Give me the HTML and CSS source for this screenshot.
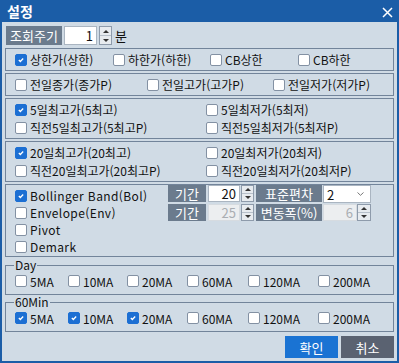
FILE: index.html
```html
<!DOCTYPE html>
<html lang="ko">
<head>
    <meta charset="UTF-8">
    <meta name="viewport" content="width=device-width, initial-scale=1.0">
    <title>설정</title>
    <link rel="stylesheet" href="styles.css">
</head>
<body>
    <div class="window">
        <div class="titlebar">
            <span class="title">설정</span>
            <svg class="close" width="11" height="11" viewBox="0 0 11 11"><path d="M1 1L10 10M10 1L1 10" stroke="#fff" stroke-width="1.5"/></svg>
        </div>

        <div class="panel">
            <div class="period-row">
                <span class="tag tag-period">조회주기</span>
                <div class="num num-period">1</div>
                <div class="spin spin-period"><span class="spin-up"></span><span class="spin-down"></span></div>
                <span class="unit">분</span>
            </div>

            <!-- 상한/하한 -->
            <div class="group group-limit">
                <label class="chk checked"><span class="box"><svg viewBox="0 0 12 12"><path d="M3.4 6.1L5.2 7.8L8.6 4.3"/></svg></span>상한가(상한)</label>
                <label class="chk"><span class="box"></span>하한가(하한)</label>
                <label class="chk"><span class="box"></span>CB상한</label>
                <label class="chk"><span class="box"></span>CB하한</label>
            </div>

            <!-- 전일 -->
            <div class="group group-prev">
                <label class="chk"><span class="box"></span>전일종가(종가P)</label>
                <label class="chk"><span class="box"></span>전일고가(고가P)</label>
                <label class="chk"><span class="box"></span>전일저가(저가P)</label>
            </div>

            <!-- 5일 -->
            <div class="group group-high">
                <label class="chk checked"><span class="box"><svg viewBox="0 0 12 12"><path d="M3.4 6.1L5.2 7.8L8.6 4.3"/></svg></span>5일최고가(5최고)</label>
                <label class="chk"><span class="box"></span>5일최저가(5최저)</label>
                <label class="chk"><span class="box"></span>직전5일최고가(5최고P)</label>
                <label class="chk"><span class="box"></span>직전5일최저가(5최저P)</label>
            </div>

            <!-- 20일 -->
            <div class="group group-high group-high20">
                <label class="chk checked"><span class="box"><svg viewBox="0 0 12 12"><path d="M3.4 6.1L5.2 7.8L8.6 4.3"/></svg></span>20일최고가(20최고)</label>
                <label class="chk"><span class="box"></span>20일최저가(20최저)</label>
                <label class="chk"><span class="box"></span>직전20일최고가(20최고P)</label>
                <label class="chk"><span class="box"></span>직전20일최저가(20최저P)</label>
            </div>

            <!-- 밴드 -->
            <div class="group group-band">
                <div class="band-list">
                    <label class="chk checked"><span class="box"><svg viewBox="0 0 12 12"><path d="M3.4 6.1L5.2 7.8L8.6 4.3"/></svg></span><span class="latin">Bollinger Band(Bol)</span></label>
                    <label class="chk"><span class="box"></span><span class="latin">Envelope(Env)</span></label>
                    <label class="chk"><span class="box"></span><span class="latin">Pivot</span></label>
                    <label class="chk"><span class="box"></span><span class="latin">Demark</span></label>
                </div>
                <div class="band-grid">
                    <div class="band-row">
                        <span class="tag tag-term">기간</span>
                        <div class="num num-term">20</div>
                        <div class="spin spin-term"><span class="spin-up"></span><span class="spin-down"></span></div>
                        <span class="tag tag-wide">표준편차</span>
                        <div class="select"><span>2</span><svg width="7" height="4" viewBox="0 0 7 4"><path d="M0.5 0.5L3.5 3.3L6.5 0.5" stroke="#777" fill="none"/></svg></div>
                    </div>
                    <div class="band-row">
                        <span class="tag tag-term">기간</span>
                        <div class="num num-term disabled">25</div>
                        <div class="spin spin-term"><span class="spin-up"></span><span class="spin-down"></span></div>
                        <span class="tag tag-wide">변동폭(%)</span>
                        <div class="num num-rate disabled">6</div>
                        <div class="spin spin-rate"><span class="spin-up"></span><span class="spin-down"></span></div>
                    </div>
                </div>
            </div>

            <fieldset class="ma-group">
                <legend>Day</legend>
                <div class="ma-row">
                    <label class="chk"><span class="box"></span>5MA</label>
                    <label class="chk"><span class="box"></span>10MA</label>
                    <label class="chk"><span class="box"></span>20MA</label>
                    <label class="chk"><span class="box"></span>60MA</label>
                    <label class="chk"><span class="box"></span>120MA</label>
                    <label class="chk"><span class="box"></span>200MA</label>
                </div>
            </fieldset>

            <fieldset class="ma-group">
                <legend>60Min</legend>
                <div class="ma-row">
                    <label class="chk checked"><span class="box"><svg viewBox="0 0 12 12"><path d="M3.4 6.1L5.2 7.8L8.6 4.3"/></svg></span>5MA</label>
                    <label class="chk checked"><span class="box"><svg viewBox="0 0 12 12"><path d="M3.4 6.1L5.2 7.8L8.6 4.3"/></svg></span>10MA</label>
                    <label class="chk checked"><span class="box"><svg viewBox="0 0 12 12"><path d="M3.4 6.1L5.2 7.8L8.6 4.3"/></svg></span>20MA</label>
                    <label class="chk"><span class="box"></span>60MA</label>
                    <label class="chk"><span class="box"></span>120MA</label>
                    <label class="chk"><span class="box"></span>200MA</label>
                </div>
            </fieldset>

            <div class="actions">
                <button class="btn btn-ok">확인</button>
                <button class="btn btn-cancel">취소</button>
            </div>
        </div>
    </div>
</body>
</html>
```

FILE: styles.css
```css
/* 설정 dialog */
body {
    margin: 0;
    font-family: "Noto Sans CJK KR", "Liberation Sans", sans-serif;
    font-size: 12px;
    color: #111;
}

.window {
    width: 399px;
    height: 363px;
    box-sizing: border-box;
    background-color: #1b5da7;
    padding: 0 2px 2px;
    display: flex;
    flex-direction: column;
}

.titlebar {
    height: 22px;
    flex: none;
    display: flex;
    align-items: center;
    justify-content: space-between;
    padding: 0 4px 0 5px;
    color: #fff;
}

.title {
    font-size: 14px;
    font-weight: bold;
}

.close {
    margin-top: 2px;
}

.panel {
    flex: 1;
    background-color: #d0dbe5;
    padding: 4px 3px 0;
    display: flex;
    flex-direction: column;
}

/* label boxes */
.tag {
    background-color: #6b7b8d;
    color: #fff;
    font-size: 13px;
    display: flex;
    align-items: center;
    justify-content: center;
    flex: none;
}

.period-row {
    display: flex;
    align-items: center;
    height: 19px;
    padding-left: 1px;
}

.tag-period {
    width: 56px;
    height: 19px;
}

.num {
    background-color: #fff;
    border: 1px solid #aab5c1;
    box-sizing: border-box;
    display: flex;
    align-items: center;
    justify-content: flex-end;
    padding-right: 3px;
    font-size: 13px;
    flex: none;
}

.num.disabled {
    background-color: #eceef0;
    border-color: #d6dbe0;
    color: #a9adb2;
}

.num-period {
    width: 33px;
    height: 19px;
    margin-left: 2px;
}

/* spinner */
.spin {
    width: 13px;
    box-sizing: border-box;
    border: 1px solid #8e9bab;
    background-color: #e7ebef;
    display: flex;
    flex-direction: column;
    flex: none;
}

.spin span {
    flex: 1;
    display: flex;
    align-items: center;
    justify-content: center;
}

.spin-up {
    border-bottom: 1px solid #b7c0ca;
}

.spin-up::after {
    content: "";
    border-left: 3px solid transparent;
    border-right: 3px solid transparent;
    border-bottom: 3px solid #333;
}

.spin-down::after {
    content: "";
    border-left: 3px solid transparent;
    border-right: 3px solid transparent;
    border-top: 3px solid #333;
}

.spin-period {
    height: 19px;
    margin-left: 2px;
}

.unit {
    margin-left: 3px;
    font-size: 13px;
}

/* groups */
.group {
    border: 1px solid #72849a;
    box-sizing: border-box;
    margin-top: 2px;
    padding-left: 9px;
    display: grid;
    align-content: center;
    flex: none;
}

.group-limit {
    margin-top: 3px;
    height: 23px;
    grid-template-columns: 98px 97px 88px auto;
}

.group-prev {
    height: 23px;
    grid-template-columns: 132px 126px auto;
}

.group-high {
    height: 41px;
    grid-template-columns: 191px auto;
}

/* checkbox */
.chk {
    display: flex;
    align-items: center;
    gap: 3px;
    height: 18px;
    white-space: nowrap;
}

.latin {
    letter-spacing: 0.4px;
}

.box {
    width: 12px;
    height: 12px;
    box-sizing: border-box;
    border: 1px solid #8391a3;
    border-radius: 2px;
    background-color: #fff;
    flex: none;
}

.box svg {
    display: block;
    width: 10px;
    height: 10px;
}

.box path {
    fill: none;
    stroke: #fff;
    stroke-width: 1.6;
}

.checked .box {
    background-color: #1c6fd3;
    border-color: #1c6fd3;
}

/* band */
.group-band {
    height: 73px;
    display: flex;
    align-items: flex-start;
}

.band-list {
    width: 153px;
    padding-top: 2px;
    display: flex;
    flex-direction: column;
}

.band-list .chk {
    height: 17px;
}

.band-grid {
    display: flex;
    flex-direction: column;
    gap: 2px;
}

.band-row {
    display: flex;
    height: 17px;
}

.band-row > * {
    height: 17px;
}

.tag-term {
    width: 38px;
}

.num-term {
    width: 32px;
    margin-left: 2px;
}

.spin-term {
    margin-left: 1px;
}

.tag-wide {
    width: 66px;
    margin-left: 2px;
}

.select {
    width: 48px;
    height: 18px !important;
    margin-left: 1px;
    box-sizing: border-box;
    background-color: #fff;
    border: 1px solid #aab5c1;
    display: flex;
    align-items: center;
    justify-content: space-between;
    padding: 0 6px 0 3px;
    font-size: 13px;
}

.num-rate {
    width: 34px;
    margin-left: 1px;
}

.spin-rate {
    width: 14px;
}

/* MA */
.ma-group {
    border: 1px solid #72849a;
    margin: 1px 0 0;
    padding: 0 0 4px 9px;
    min-width: 0;
}

.ma-group + .ma-group {
    margin-top: 0;
}

.ma-group legend {
    padding: 0 1px;
    margin-left: -1px;
    line-height: 14px;
    font-size: 12px;
}

.ma-row {
    display: grid;
    grid-template-columns: 53px 59px 60px 61px 70px auto;
    height: 18px;
    align-items: center;
}

/* buttons */
.actions {
    display: flex;
    justify-content: flex-end;
    gap: 3px;
    margin-top: 4px;
}

.btn {
    width: 53px;
    height: 22px;
    border: none;
    color: #fff;
    font-family: inherit;
    font-size: 13px;
    padding: 0;
}

.btn-ok {
    background-color: #1a73d3;
}

.btn-cancel {
    background-color: #5a6271;
}
```
